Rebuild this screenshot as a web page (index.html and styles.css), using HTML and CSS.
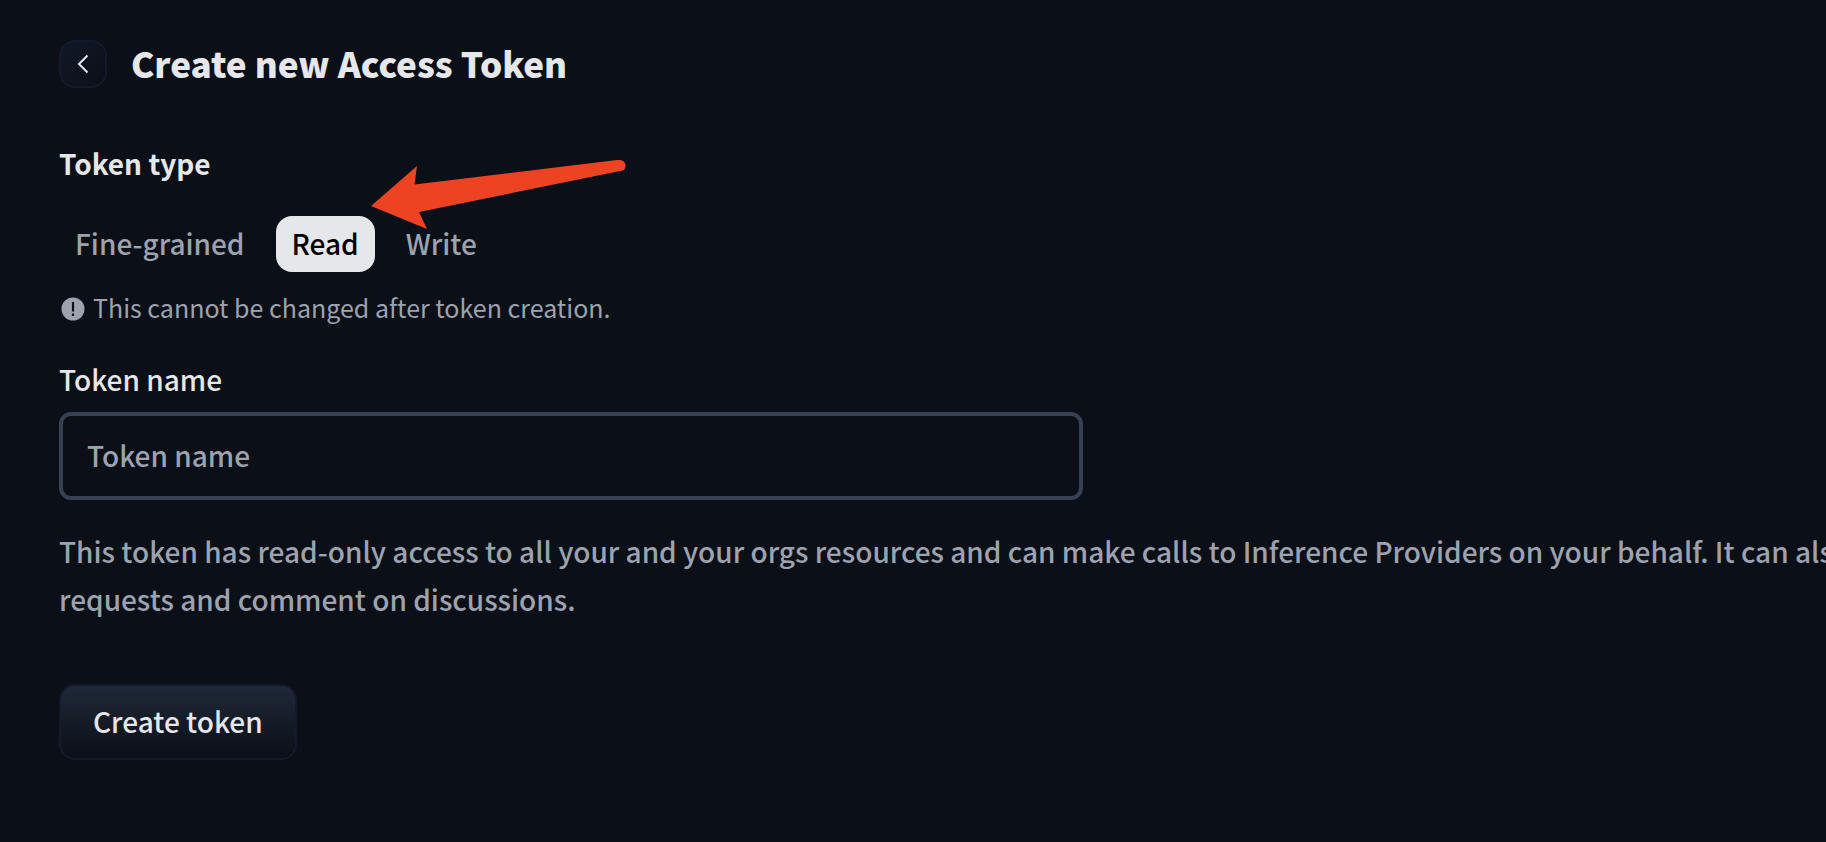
FILE: index.html
```html
<!DOCTYPE html>
<html lang="en">
<head>
<meta charset="utf-8">
<title>Create new Access Token</title>
<link rel="stylesheet" href="styles.css">
</head>
<body>
<main class="page">
  <header class="header">
    <button class="back" type="button" aria-label="Back">
      <svg width="12" height="20" viewBox="0 0 12 20" fill="none" stroke="currentColor" stroke-width="2"><path d="M10.500 1.500 2 10l8.500 8.500"/></svg>
    </button>
    <h1 class="title">Create new Access Token</h1>
  </header>
  <form class="form">
    <fieldset class="types">
      <legend class="types-title">Token type</legend>
      <div class="tabs">
        <label class="tab"><input class="tab-input" type="radio" name="type">Fine-grained</label>
        <label class="tab"><input class="tab-input" type="radio" name="type" checked>Read</label>
        <label class="tab"><input class="tab-input" type="radio" name="type">Write</label>
      </div>
      <svg class="arrow" width="256" height="70" viewBox="0 0 256 70"><path fill="#ee4323" d="M0 46 46 6 43.500 24.500 246 0C252-.5 254.500 2 254.500 6 254.500 9 253 10.500 249 11L48 52 56 69Z"/></svg>
    </fieldset>
    <p class="note">
      <svg class="note-icon" width="24" height="24" viewBox="0 0 24 24"><circle cx="12" cy="12" r="11.500" fill="currentColor"/><path fill="none" stroke="#0b0f17" stroke-width="2.200" d="M12 5v9.500M12 16.500v2.500"/></svg>
      <span>This cannot be changed after token creation.</span>
    </p>
    <label class="label" for="name">Token name</label>
    <input class="field" id="name" type="text" placeholder="Token name">
    <p class="about">This token has read-only access to all your and your orgs resources and can make calls to Inference Providers on your behalf. It can also<br>requests and comment on discussions.</p>
    <button class="submit" type="button">Create token</button>
  </form>
</main>
</body>
</html>
```
FILE: styles.css
```css
* { box-sizing: border-box; }
body {
  margin: 0;
  background: #0b0f17;
  color: #e5e7eb;
  font: 500 28px/40px "Noto Sans CJK SC", "Noto Sans", sans-serif;
  overflow: hidden;
}
button, input { font: inherit; color: inherit; }
.page { padding: 40px 0 80px 59px; min-height: 100vh; }
.header { display: flex; align-items: flex-start; gap: 24px; }
.back {
  display: grid;
  place-items: center;
  width: 48px;
  height: 48px;
  padding: 0;
  border: 2px solid #141a2c;
  border-radius: 16px;
  background: linear-gradient(135deg, #111827, #0b0f17);
}
.title { margin: 0; font-size: 35px; line-height: 46px; font-weight: 900; }
.form { display: flex; flex-direction: column; align-items: flex-start; margin-top: 55px; }
.types { position: relative; margin: 0; padding: 0; border: 0; }
.types-title { padding: 0; font-weight: 700; }
.tabs { display: flex; gap: 15px; margin-top: 33px; }
.tab {
  padding: 7px 16px 9px;
  border-radius: 16px;
  color: #9ca3af;
}
.tab:has(:checked) { background: #e5e7eb; color: #000; }
.tab-input { position: absolute; opacity: 0; margin: 0; }
.arrow { position: absolute; left: 312px; top: -23px; }
.note {
  display: flex;
  align-items: flex-end;
  gap: 8px;
  margin: 19px 0 36px;
  padding-left: 2px;
  font-size: 25px;
  font-weight: 400;
  line-height: 32px;
  color: #9ca3af;
}
.note-icon { margin-bottom: 2px; }
.field {
  width: 1024px;
  max-width: 100%;
  height: 88px;
  margin: 13px 0 27px;
  padding: 0 24px 2px;
  border: 4px solid #374151;
  border-radius: 12px;
  background: transparent;
}
.field::placeholder { color: #9ca3af; opacity: 1; }
.about { margin: 0; line-height: 48px; white-space: nowrap; color: #9ca3af; }
.submit {
  margin-top: 61px;
  padding: 15px 32px 17px;
  border: 2px solid #141a2c;
  border-radius: 16px;
  background: linear-gradient(#1f2937, #0b0f17);
}
```
